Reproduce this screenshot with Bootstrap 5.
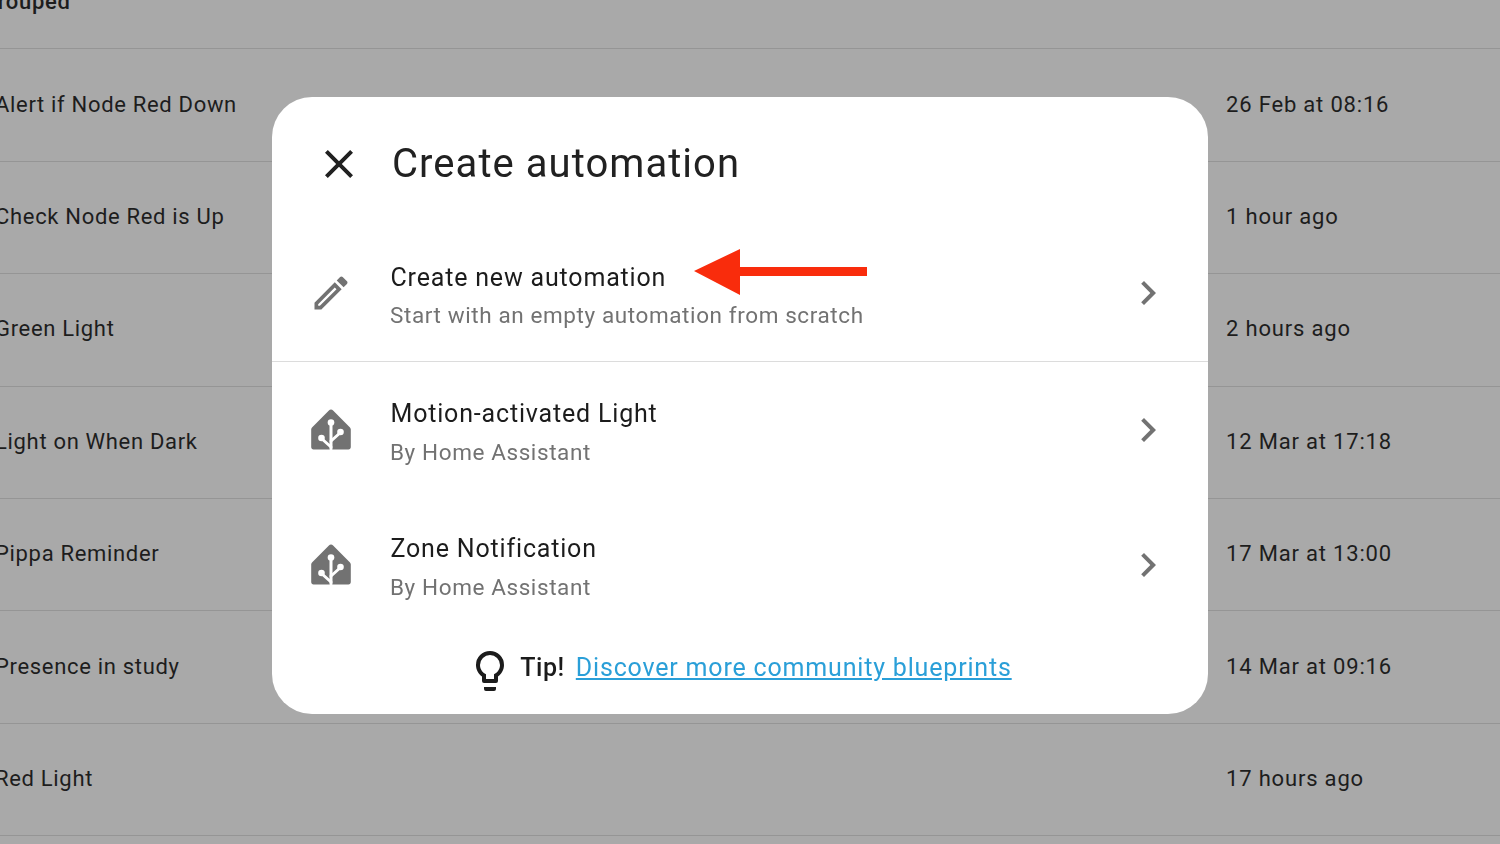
<!DOCTYPE html>
<html lang="en">
<head>
<meta charset="utf-8">
<title>Create automation</title>
<link rel="stylesheet" href="https://cdn.jsdelivr.net/npm/bootstrap@5.3.0/dist/css/bootstrap.min.css">
<style>
html,body{height:100%;overflow:hidden;}
body{background:#a9a9a9;font-family:Roboto,"Liberation Sans",sans-serif;color:#1b1b1b;}
.bg-list{margin-top:-63px;}
.bg-row{height:112.4px;border-bottom:1px solid #959595;font-size:22px;letter-spacing:.68px;color:#1d1d1d;padding-bottom:2px;}
.bg-name{margin-left:-5px;flex:0 0 1231px;}
.bg-date{letter-spacing:.82px;}
.bg-group{padding-top:17px;padding-bottom:0;}
.bg-group .bg-name{margin-left:-18px;font-weight:500;}
.scrim{inset:0;padding:97px 20px 0 0;}
.dlg{width:936px;height:617px;border:0;border-radius:40px;background:#fff;}
.dlg-head{height:129px;padding:4px 0 0 43px;gap:29px;}
.dlg-title{font-size:40px;font-weight:400;letter-spacing:1.05px;margin:0;color:#212121;}
.ic-48{width:48px;height:48px;flex:none;}
.ic-pencil{width:44px;height:44px;margin:0 2px;flex:none;}
.opt{height:135px;border:0;padding:0 36px 0 35px;gap:35px;}
.opt.first{height:136px;border-bottom:1px solid #dcdcdc;padding-bottom:2px;}
.opt-text{padding-top:7px;}
.opt-title{font-size:25px;letter-spacing:.82px;color:#1c1c1c;line-height:38px;margin-left:.5px;}
.first .opt-title{padding-top:1px;margin-bottom:-1px;}
.opt-sub{font-size:22.5px;letter-spacing:.6px;color:#727272;line-height:38px;}
.ic-grey{fill:#727272;}
.tip{height:82px;padding:0 2px 10px 0;gap:11px;font-size:25px;letter-spacing:.55px;}
.tip-label{font-weight:500;}
.tip a{color:#2a9fd8;letter-spacing:.82px;}
.tip-bulb{margin-right:-5px;margin-top:6px;}
.note-arrow{left:421px;top:152px;}
</style>
</head>
<body>
<div class="bg-list">
  <div class="bg-row bg-group d-flex align-items-center"><span class="bg-name">Grouped</span></div>
  <div class="bg-row d-flex align-items-center"><span class="bg-name">Alert if Node Red Down</span><span class="bg-date">26 Feb at 08:16</span></div>
  <div class="bg-row d-flex align-items-center"><span class="bg-name">Check Node Red is Up</span><span class="bg-date">1 hour ago</span></div>
  <div class="bg-row d-flex align-items-center"><span class="bg-name">Green Light</span><span class="bg-date">2 hours ago</span></div>
  <div class="bg-row d-flex align-items-center"><span class="bg-name">Light on When Dark</span><span class="bg-date">12 Mar at 17:18</span></div>
  <div class="bg-row d-flex align-items-center"><span class="bg-name">Pippa Reminder</span><span class="bg-date">17 Mar at 13:00</span></div>
  <div class="bg-row d-flex align-items-center"><span class="bg-name">Presence in study</span><span class="bg-date">14 Mar at 09:16</span></div>
  <div class="bg-row d-flex align-items-center"><span class="bg-name">Red Light</span><span class="bg-date">17 hours ago</span></div>
</div>

<div class="scrim position-fixed d-flex justify-content-center align-items-start">
  <div class="card dlg position-relative overflow-hidden">
    <div class="dlg-head d-flex align-items-center">
      <svg class="ic-48" viewBox="0 0 24 24" fill="#212121"><path d="M19,6.41L17.59,5L12,10.59L6.41,5L5,6.41L10.59,12L5,17.59L6.41,19L12,13.41L17.59,19L19,17.59L13.41,12L19,6.41Z"/></svg>
      <h2 class="dlg-title">Create automation</h2>
    </div>
    <div class="list-group list-group-flush">
      <div class="list-group-item opt first d-flex align-items-center">
        <svg class="ic-pencil ic-grey" viewBox="0 0 24 24"><path d="M14.06,9L15,9.94L5.92,19H5V18.08L14.06,9M17.66,3C17.41,3 17.15,3.1 16.96,3.29L15.13,5.12L18.88,8.87L20.71,7.04C21.1,6.65 21.1,6 20.71,5.63L18.37,3.29C18.17,3.09 17.92,3 17.66,3M14.06,6.19L3,17.25V21H6.75L17.81,9.94L14.06,6.19Z"/></svg>
        <div class="flex-grow-1 opt-text"><div class="opt-title">Create new automation</div><div class="opt-sub">Start with an empty automation from scratch</div></div>
        <svg class="ic-48 ic-grey" viewBox="0 0 24 24"><path d="M8.59,16.58L13.17,12L8.59,7.41L10,6L16,12L10,18L8.59,16.58Z"/></svg>
      </div>
      <div class="list-group-item opt d-flex align-items-center">
        <svg class="ic-48" viewBox="0 0 48 48"><path class="ic-grey" d="M24 3.500c.8 0 1.500.4 2.100 1L42.500 21c.7.700 1.300 1.500 1.300 2.600V41c0 1.300-1 2.400-2.300 2.400H6.500C5.200 43.400 4.200 42.300 4.200 41V23.600c0-1.100.6-1.900 1.300-2.600L21.900 4.500c.6-.6 1.300-1 2.100-1z"/><g stroke="#fff" stroke-width="3" fill="none" stroke-linecap="round"><path d="M24 18V43"/><path d="M14.500 32.500L24 41"/><path d="M33.500 26.500L24 35"/></g><g fill="#fff"><circle cx="24" cy="16.500" r="3.300"/><circle cx="14.500" cy="32" r="3.300"/><circle cx="33.500" cy="26" r="3.300"/></g></svg>
        <div class="flex-grow-1 opt-text"><div class="opt-title">Motion-activated Light</div><div class="opt-sub">By Home Assistant</div></div>
        <svg class="ic-48 ic-grey" viewBox="0 0 24 24"><path d="M8.59,16.58L13.17,12L8.59,7.41L10,6L16,12L10,18L8.59,16.58Z"/></svg>
      </div>
      <div class="list-group-item opt d-flex align-items-center">
        <svg class="ic-48" viewBox="0 0 48 48"><path class="ic-grey" d="M24 3.500c.8 0 1.500.4 2.100 1L42.500 21c.7.700 1.300 1.500 1.300 2.600V41c0 1.300-1 2.400-2.300 2.400H6.500C5.200 43.400 4.200 42.300 4.200 41V23.600c0-1.100.6-1.900 1.300-2.600L21.900 4.500c.6-.6 1.300-1 2.100-1z"/><g stroke="#fff" stroke-width="3" fill="none" stroke-linecap="round"><path d="M24 18V43"/><path d="M14.500 32.500L24 41"/><path d="M33.500 26.500L24 35"/></g><g fill="#fff"><circle cx="24" cy="16.500" r="3.300"/><circle cx="14.500" cy="32" r="3.300"/><circle cx="33.500" cy="26" r="3.300"/></g></svg>
        <div class="flex-grow-1 opt-text"><div class="opt-title">Zone Notification</div><div class="opt-sub">By Home Assistant</div></div>
        <svg class="ic-48 ic-grey" viewBox="0 0 24 24"><path d="M8.59,16.58L13.17,12L8.59,7.41L10,6L16,12L10,18L8.59,16.58Z"/></svg>
      </div>
    </div>
    <div class="tip d-flex align-items-center justify-content-center">
      <svg class="ic-48 tip-bulb" viewBox="0 0 24 24" fill="#1c1c1c"><path d="M12,2A7,7 0 0,1 19,9C19,11.38 17.81,13.47 16,14.74V17A1,1 0 0,1 15,18H9A1,1 0 0,1 8,17V14.74C6.19,13.47 5,11.38 5,9A7,7 0 0,1 12,2M9,21V20H15V21A1,1 0 0,1 14,22H10A1,1 0 0,1 9,21M12,4A5,5 0 0,0 7,9C7,11.05 8.230,12.81 10,13.58V16H14V13.58C15.77,12.81 17,11.05 17,9A5,5 0 0,0 12,4Z"/></svg>
      <span class="tip-label">Tip!</span>
      <a href="#">Discover more community blueprints</a>
    </div>
    <svg class="note-arrow position-absolute" width="175" height="46" viewBox="0 0 175 46"><path fill="#f92c0c" d="M1 22L47 0V18H174V27H47V46Z"/></svg>
  </div>
</div>
<script src="https://cdn.jsdelivr.net/npm/bootstrap@5.3.0/dist/js/bootstrap.bundle.min.js"></script>
</body>
</html>
